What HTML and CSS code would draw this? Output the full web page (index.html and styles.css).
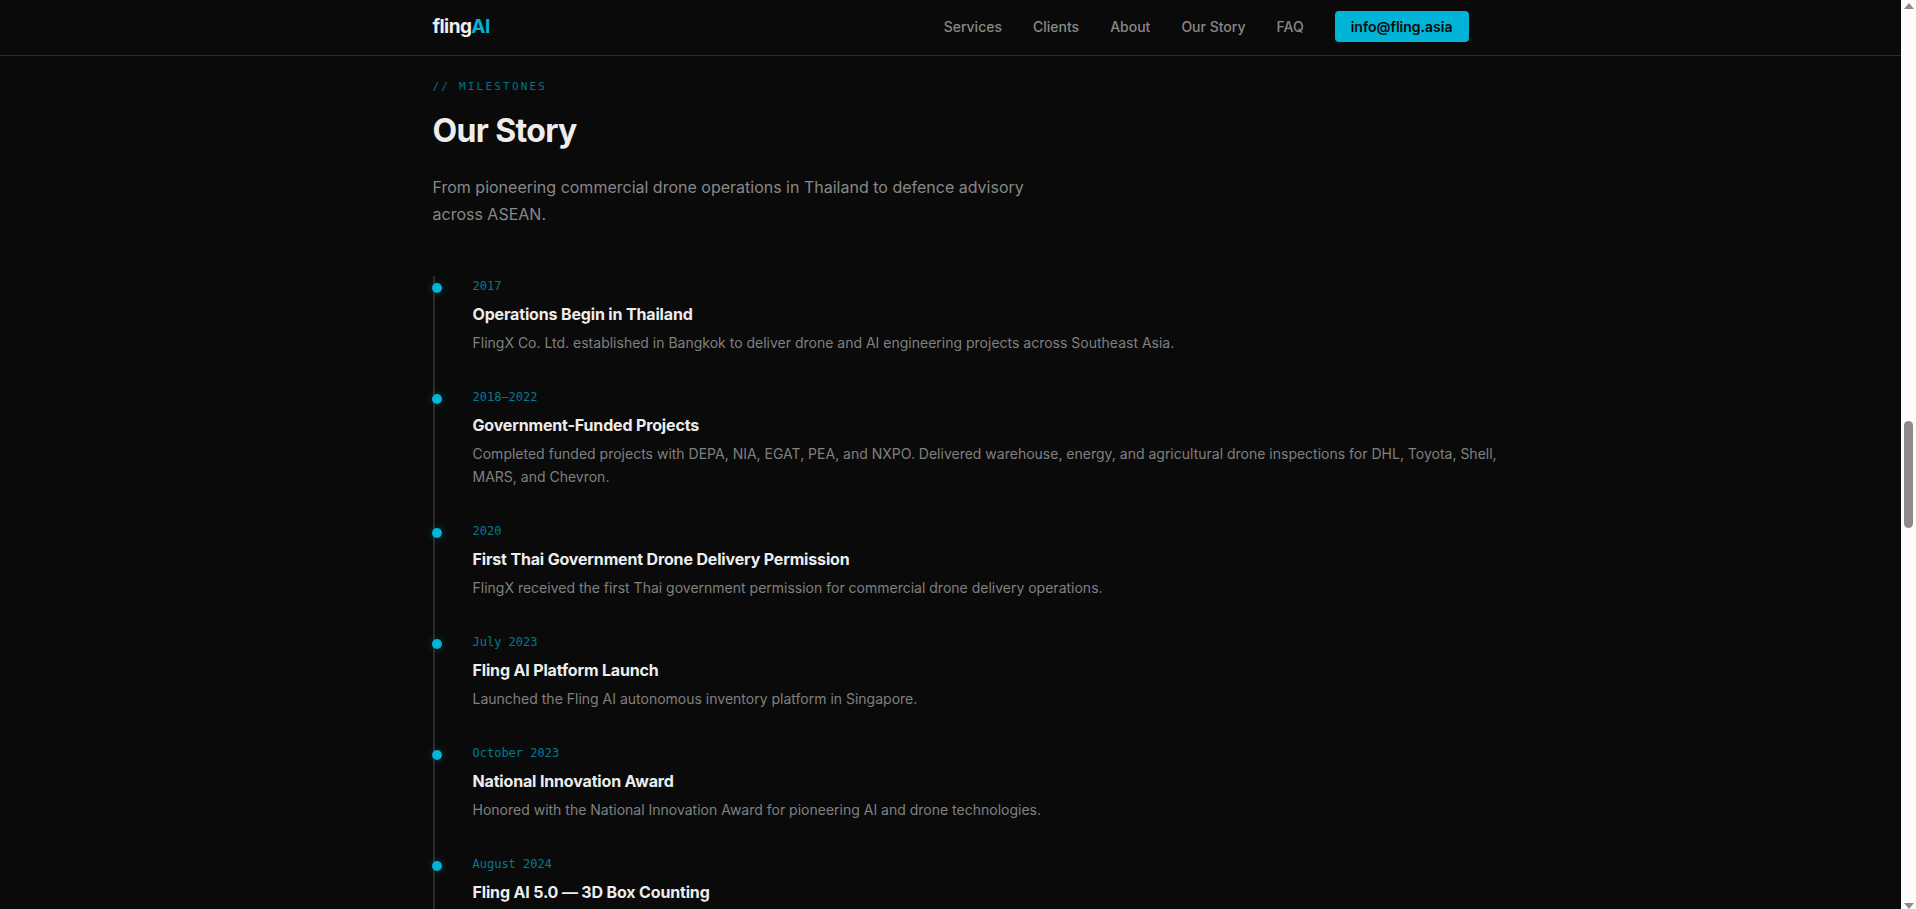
FILE: index.html
```html
<!DOCTYPE html>
<html lang="en">
<head>
    <meta charset="UTF-8">
    <meta name="viewport" content="width=device-width, initial-scale=1.0">
    <title>flingAI</title>
    <link rel="stylesheet" href="styles.css">
</head>
<body>

<div class="page">

    <header>
        <div class="container nav-inner">
            <a href="#" class="logo">fling<span>AI</span></a>
            <nav>
                <a href="#services">Services</a>
                <a href="#clients">Clients</a>
                <a href="#about">About</a>
                <a href="#story">Our Story</a>
                <a href="#faq">FAQ</a>
                <a href="mailto:info@fling.asia" class="nav-cta">info@fling.asia</a>
            </nav>
        </div>
    </header>

    <main>
        <section id="story" class="container">
            <p class="label">// MILESTONES</p>
            <h2>Our Story</h2>
            <p class="lead">From pioneering commercial drone operations in Thailand to defence advisory across ASEAN.</p>

            <div class="timeline">
                <article class="item">
                    <p class="date">2017</p>
                    <h3>Operations Begin in Thailand</h3>
                    <p class="desc">FlingX Co. Ltd. established in Bangkok to deliver drone and AI engineering projects across Southeast Asia.</p>
                </article>
                <article class="item">
                    <p class="date">2018–2022</p>
                    <h3>Government-Funded Projects</h3>
                    <p class="desc">Completed funded projects with DEPA, NIA, EGAT, PEA, and NXPO. Delivered warehouse, energy, and agricultural drone inspections for DHL, Toyota, Shell, MARS, and Chevron.</p>
                </article>
                <article class="item">
                    <p class="date">2020</p>
                    <h3>First Thai Government Drone Delivery Permission</h3>
                    <p class="desc">FlingX received the first Thai government permission for commercial drone delivery operations.</p>
                </article>
                <article class="item">
                    <p class="date">July 2023</p>
                    <h3>Fling AI Platform Launch</h3>
                    <p class="desc">Launched the Fling AI autonomous inventory platform in Singapore.</p>
                </article>
                <article class="item">
                    <p class="date">October 2023</p>
                    <h3>National Innovation Award</h3>
                    <p class="desc">Honored with the National Innovation Award for pioneering AI and drone technologies.</p>
                </article>
                <article class="item">
                    <p class="date">August 2024</p>
                    <h3>Fling AI 5.0 — 3D Box Counting</h3>
                </article>
            </div>
        </section>
    </main>

</div>

<div class="scrollbar" aria-hidden="true">
    <svg width="10" height="6" viewBox="0 0 10 6"><path d="M5 0L10 6H0z" fill="#8b8b8b"/></svg>
    <div class="track"><div class="thumb"></div></div>
    <svg width="10" height="6" viewBox="0 0 10 6"><path d="M0 0h10L5 6z" fill="#8b8b8b"/></svg>
</div>

</body>
</html>
```
FILE: styles.css
```css
* {
    box-sizing: border-box;
    margin: 0;
    padding: 0;
}

body {
    display: flex;
    height: 100vh;
    overflow: hidden;
    background: #0a0a0a;
    color: #ededed;
    font-family: Inter, "Liberation Sans", sans-serif;
}

a {
    color: inherit;
    text-decoration: none;
}

.page {
    flex: 1;
    height: 100vh;
    overflow: hidden;
}

.container {
    max-width: 1100px;
    margin: 0 auto;
    padding: 0 32px;
}

/* header */
header {
    border-bottom: 1px solid #2a2a2a;
}

.nav-inner {
    display: flex;
    justify-content: space-between;
    align-items: center;
    height: 55px;
    padding-bottom: 2px;
}

.logo {
    font-size: 19px;
    font-weight: 700;
    letter-spacing: -0.03em;
}

.logo span {
    color: #00b4d8;
}

nav {
    display: flex;
    align-items: center;
    gap: 31px;
    color: #888;
    font-size: 14px;
    font-weight: 500;
}

.nav-cta {
    padding: 7px 16px;
    border-radius: 4px;
    background: #00b4d8;
    color: #0a0a0a;
    font-weight: 600;
    line-height: 17px;
}

/* story */
#story {
    padding-top: 21px;
}

.label {
    margin-bottom: 15px;
    color: #00b4d8;
    font-family: "DejaVu Sans Mono", monospace;
    font-size: 11px;
    line-height: 20px;
    letter-spacing: 0.2em;
    opacity: 0.6;
}

h2 {
    margin-bottom: 24px;
    font-size: 32px;
    font-weight: 700;
    line-height: 38px;
    letter-spacing: -0.02em;
}

.lead {
    max-width: 600px;
    margin-bottom: 48px;
    color: #888;
    font-size: 16px;
    line-height: 27px;
}

/* timeline */
.timeline {
    margin-right: -32px;
    border-left: 2px solid #2a2a2a;
}

.item {
    position: relative;
    padding: 0 0 33px 38px;
}

.item::before {
    content: "";
    position: absolute;
    top: 7px;
    left: -3px;
    width: 10px;
    height: 10px;
    border-radius: 50%;
    background: #00b4d8;
    box-shadow: 0 0 8px rgba(0, 180, 216, 0.3);
}

.date {
    margin-bottom: 4px;
    color: #00b4d8;
    font-family: "DejaVu Sans Mono", monospace;
    font-size: 12px;
    line-height: 20px;
    opacity: 0.65;
}

h3 {
    margin-bottom: 3px;
    font-size: 16px;
    font-weight: 700;
    line-height: 28px;
    letter-spacing: -0.01em;
}

.desc {
    color: #808080;
    font-size: 14px;
    line-height: 23px;
}

/* scrollbar */
.scrollbar {
    display: flex;
    flex-direction: column;
    align-items: center;
    width: 15px;
    height: 100vh;
    padding: 3px 0 0;
    background: #fcfcfc;
}

.track {
    flex: 1;
    width: 9px;
}

.thumb {
    height: 12%;
    margin-top: 412px;
    border-radius: 5px;
    background: #8b8b8b;
}
```
